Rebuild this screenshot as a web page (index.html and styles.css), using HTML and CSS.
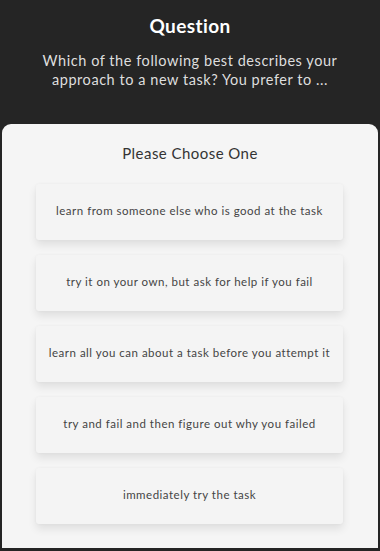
FILE: index.html
```html
<!DOCTYPE html>
<html lang="en">
<head>
    <meta charset="UTF-8">
    <meta name="viewport" content="width=device-width, initial-scale=1.0">
    <title>Question</title>
    <link rel="stylesheet" href="styles.css">
</head>
<body>
    <div class="header">
        <h1>Question</h1>
        <p class="question-text">Which of the following best describes your approach to a new task? You prefer to ...</p>
    </div>
    <div class="panel">
        <h2>Please Choose One</h2>
        <ul class="answers">
            <li class="answer">learn from someone else who is good at the task</li>
            <li class="answer">try it on your own, but ask for help if you fail</li>
            <li class="answer">learn all you can about a task before you attempt it</li>
            <li class="answer">try and fail and then figure out why you failed</li>
            <li class="answer">immediately try the task</li>
        </ul>
    </div>
</body>
</html>
```

FILE: styles.css
```css
body {
    font-family: "Lato", "Open Sans", sans-serif;
    background-color: #252525;
    margin: 0;
    padding: 0;
    height: 551px;
    overflow: hidden;
    text-align: center;
}
.header {
    height: 124px;
    padding: 14px 20px 0;
    box-sizing: border-box;
    color: #fff;
}
.header h1 {
    margin: 0;
    font-size: 19px;
    line-height: 24px;
    font-weight: 700;
    letter-spacing: 0.4px;
}
.question-text {
    margin: 14px 0 0;
    font-size: 14.5px;
    line-height: 18.5px;
    color: #dedede;
    letter-spacing: 0.55px;
}
.panel {
    margin: 0 2px;
    height: 424px;
    background-color: #f5f5f5;
    border-radius: 9px 9px 0 0;
    padding-top: 19px;
    box-sizing: border-box;
}
.panel h2 {
    margin: 0 0 21px;
    font-size: 15px;
    line-height: 20px;
    font-weight: 400;
    color: #333;
    letter-spacing: 0.45px;
}
.answers {
    list-style-type: none;
    margin: 0;
    padding: 0 35px 0 34px;
    display: flex;
    flex-direction: column;
    gap: 15px;
}
.answer {
    height: 56px;
    padding-bottom: 3px;
    box-sizing: border-box;
    display: flex;
    align-items: center;
    justify-content: center;
    background-color: #f4f4f4;
    border-radius: 3px;
    box-shadow: 0 5px 8px rgba(0, 0, 0, 0.09), 0 0 3px rgba(0, 0, 0, 0.04);
    font-size: 11.5px;
    color: #444;
    letter-spacing: 0.5px;
}
```
